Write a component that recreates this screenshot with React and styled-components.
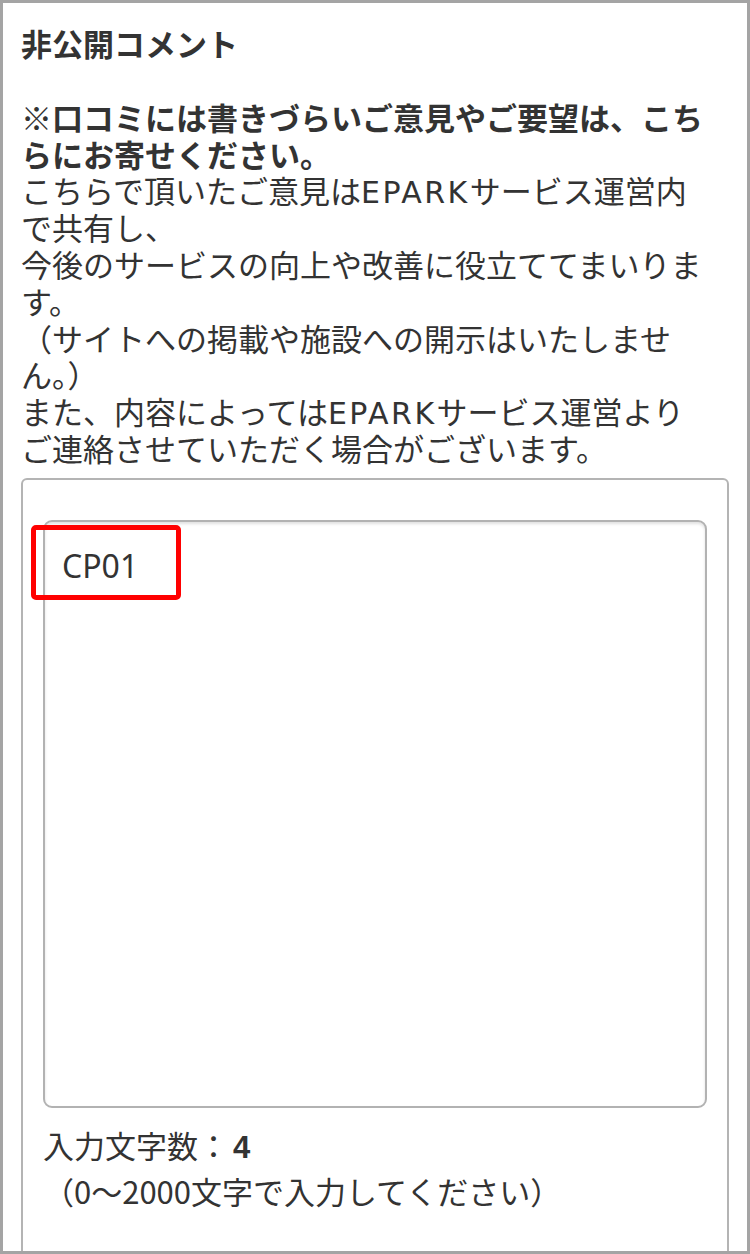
import React from "react";
import styled, { createGlobalStyle } from "styled-components";

const GlobalStyle = createGlobalStyle`
    body {
        margin: 0;
        background: #ffffff;
        font-family: "Noto Sans CJK JP", "Noto Sans", sans-serif;
        color: #333333;
    }
`

const Frame = styled.div`
    box-sizing: border-box;
    width: 750px;
    height: 1254px;
    border: 3px solid #a4a4a4;
    padding: 22px 18px 0;
    overflow: hidden;
    background: #ffffff;
`

const Title = styled.h2`
    margin: 0 0 37px;
    font-size: 31px;
    line-height: 36.8px;
    font-weight: bold;
`

const Text = styled.p`
    margin: 0;
    font-size: 31px;
    line-height: 36.8px;
    font-weight: ${(p) => (p.$bold ? "bold" : "normal")};
    white-space: nowrap;
`

const Latin = styled.span`
    font-family: "DejaVu Sans", sans-serif;
    font-size: 30px;
    line-height: 0;
    letter-spacing: 2.5px;
`

const Panel = styled.div`
    margin-top: 11px;
    border: 2px solid #b4b4b4;
    border-radius: 6px;
    padding: 40px 20px 200px;
`

const Field = styled.div`
    position: relative;
`

const TextBox = styled.textarea`
    display: block;
    box-sizing: border-box;
    width: 100%;
    height: 588px;
    margin: 0;
    padding: 22px 17px;
    border: 2px solid #b2b2b2;
    border-radius: 9px;
    box-shadow: inset 0 2px 3px rgba(0, 0, 0, 0.12);
    font-family: "Noto Sans", sans-serif;
    font-size: 32px;
    line-height: 44px;
    color: #333333;
    background: #ffffff;
    resize: none;
    outline: none;
`

const Highlight = styled.div`
    position: absolute;
    left: -12px;
    top: 5px;
    box-sizing: border-box;
    width: 150px;
    height: 75px;
    border: 5px solid #ff0000;
    border-radius: 5px;
    pointer-events: none;
`

const Counter = styled.div`
    margin-top: 14px;
    font-size: 31px;
    line-height: 46px;
`

const Count = styled.span`
    font-family: "Liberation Sans", sans-serif;
    font-weight: bold;
    line-height: 0;
    margin-left: 4px;
`

const App = () => {

    return (

        <Frame>
            <GlobalStyle />
            <Title>非公開コメント</Title>
            <Text $bold>※口コミには書きづらいご意見やご要望は、こち</Text>
            <Text $bold>らにお寄せください。</Text>
            <Text>こちらで頂いたご意見は<Latin>EPARK</Latin>サービス運営内</Text>
            <Text>で共有し、</Text>
            <Text>今後のサービスの向上や改善に役立ててまいりま</Text>
            <Text>す。</Text>
            <Text>（サイトへの掲載や施設への開示はいたしませ</Text>
            <Text>ん。）</Text>
            <Text>また、内容によっては<Latin>EPARK</Latin>サービス運営より</Text>
            <Text>ご連絡させていただく場合がございます。</Text>
            <Panel>
                <Field>
                    <TextBox defaultValue="CP01" readOnly />
                    <Highlight />
                </Field>
                <Counter>
                    <div>入力文字数：<Count>4</Count></div>
                    <div>（0〜2000文字で入力してください）</div>
                </Counter>
            </Panel>
        </Frame>

    )

};

export default App;
